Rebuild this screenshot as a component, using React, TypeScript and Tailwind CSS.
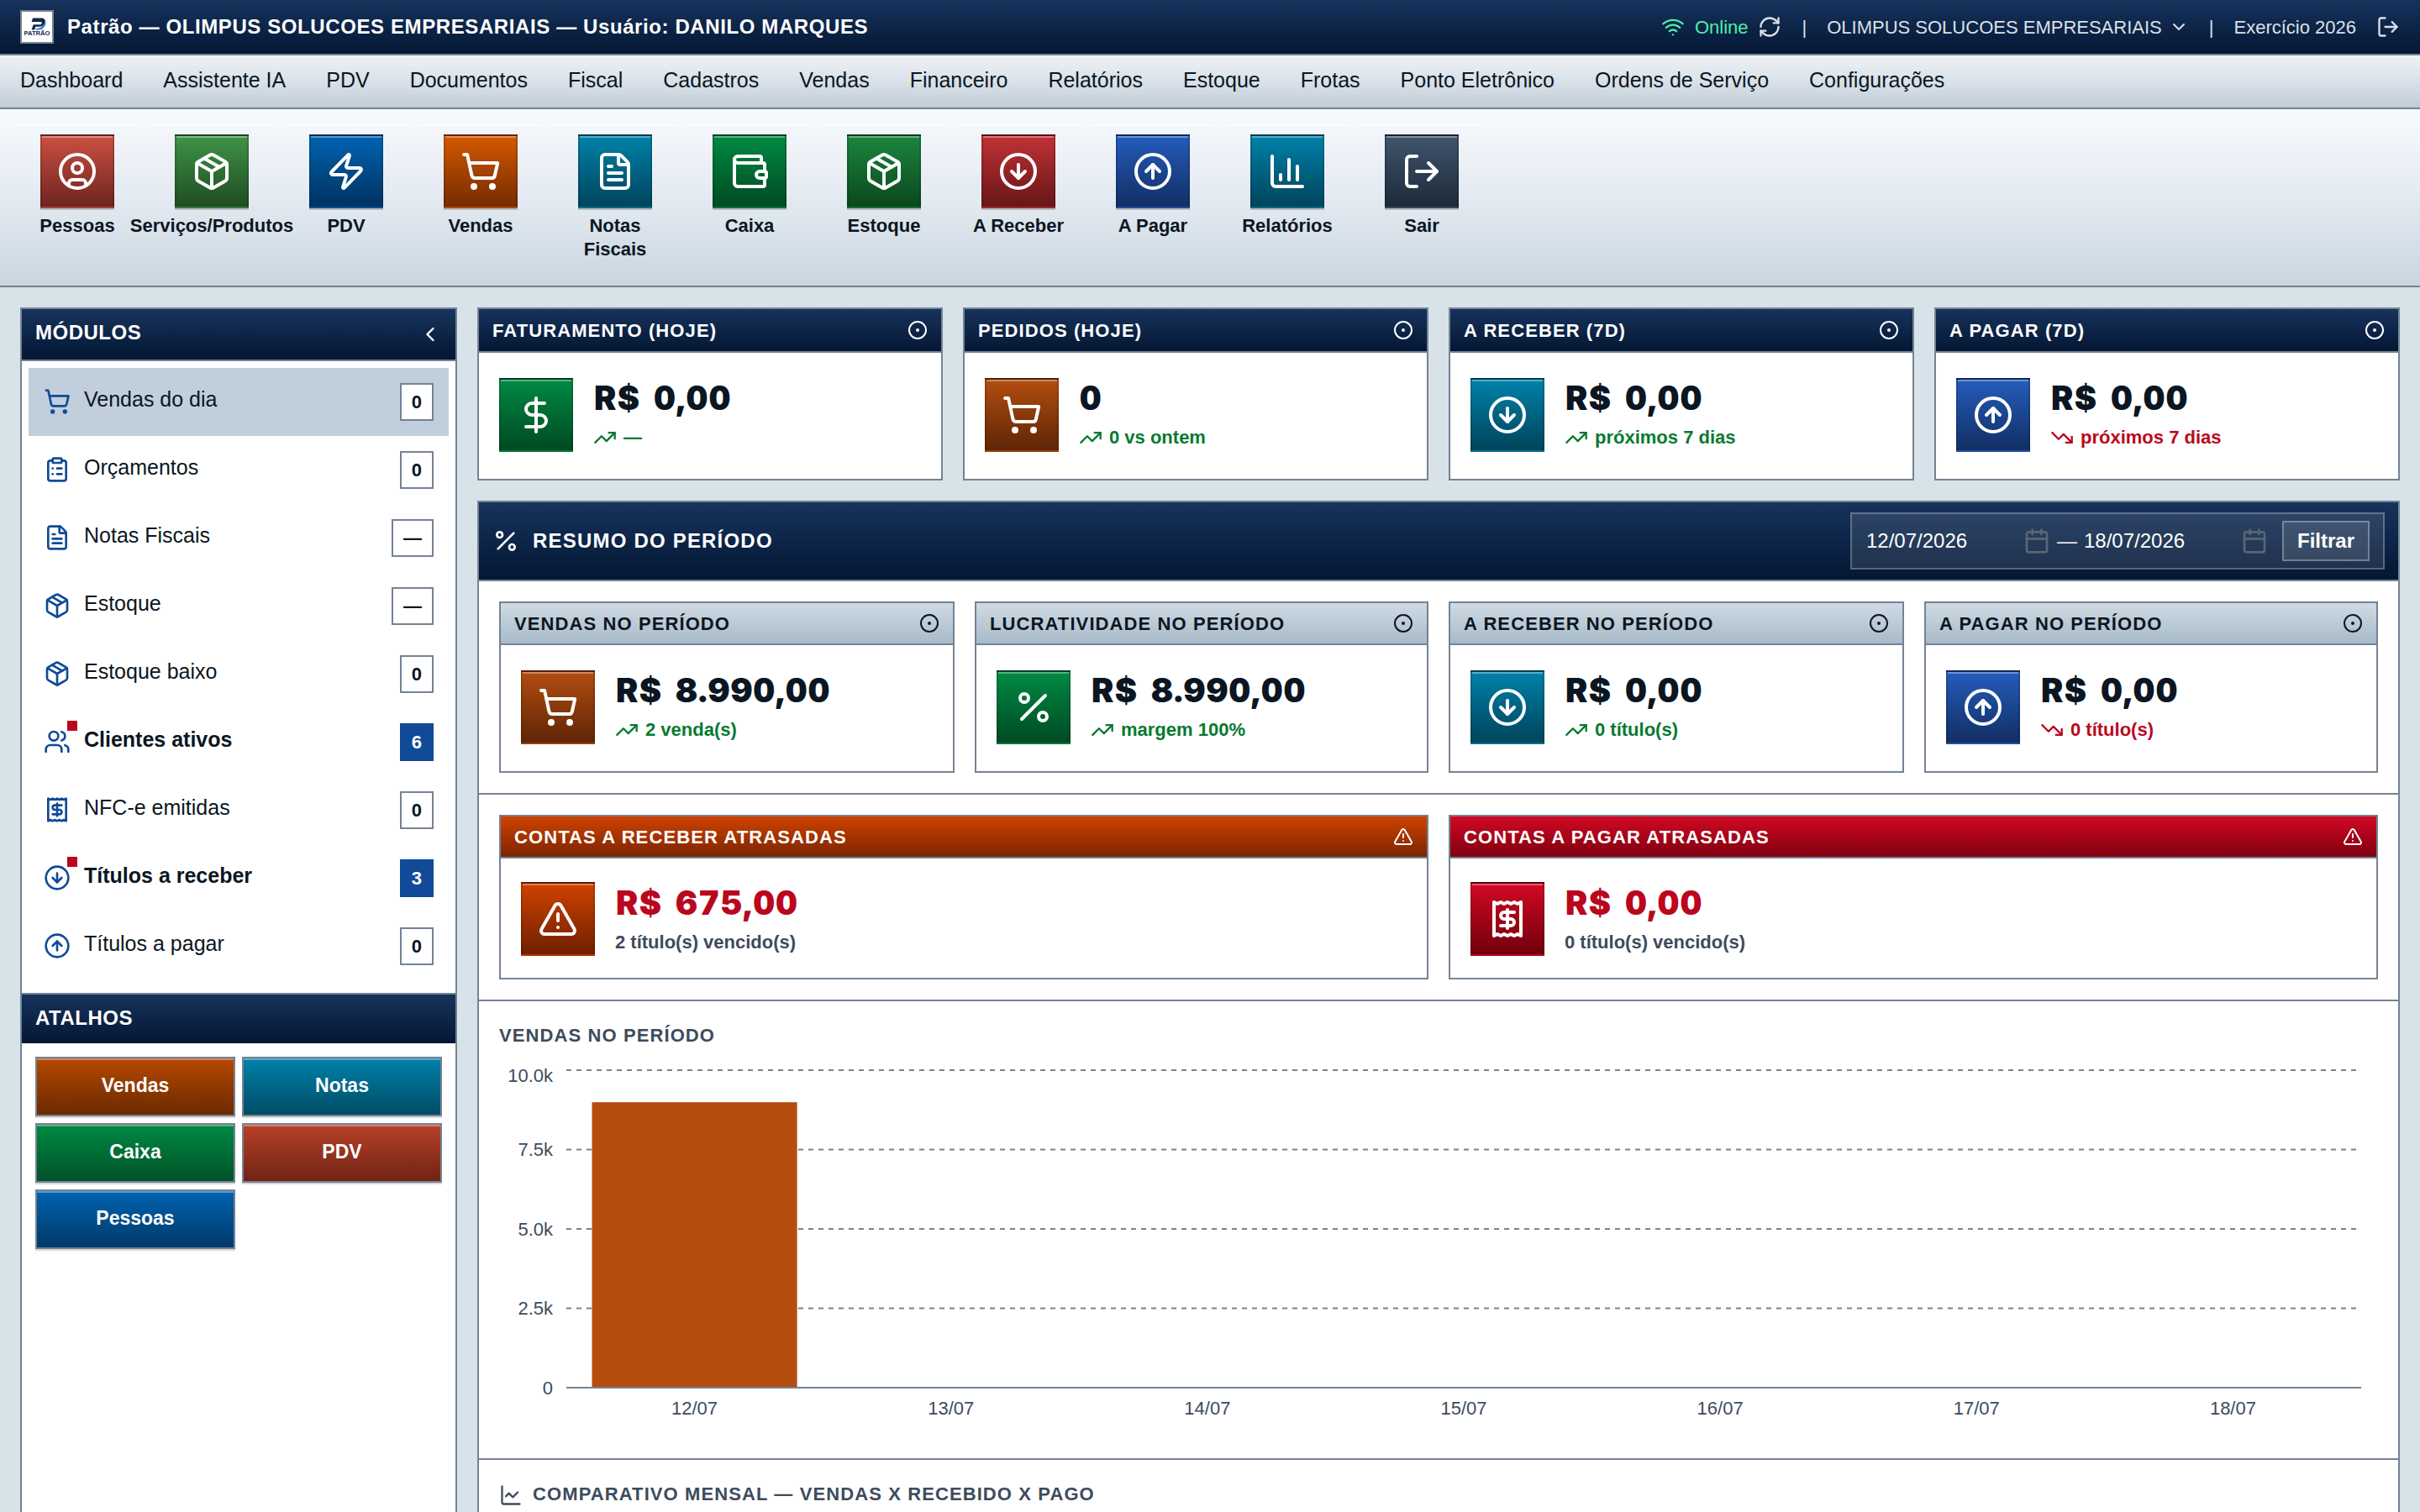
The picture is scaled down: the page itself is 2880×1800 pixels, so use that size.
import type { ReactNode } from 'react';
import {
  Calendar,
  ChartColumn,
  ChartLine,
  ChevronDown,
  ChevronLeft,
  CircleArrowDown,
  CircleArrowUp,
  CircleDot,
  CircleUser,
  ClipboardList,
  DollarSign,
  FileText,
  LogOut,
  Package,
  Percent,
  RefreshCw,
  ShoppingCart,
  TrendingDown,
  TrendingUp,
  TriangleAlert,
  Users,
  Wallet,
  Wifi,
  Zap,
} from 'lucide-react';
import clsx from 'clsx';

type Icon = (props: { size?: number | string; className?: string }) => ReactNode;
type IconType = Icon | typeof Zap;

function Receipt({ size = 24, className }: { size?: number | string; className?: string }) {
  return (
    <svg
      width={size}
      height={size}
      viewBox="0 0 24 24"
      fill="none"
      stroke="currentColor"
      strokeWidth="2"
      strokeLinecap="round"
      strokeLinejoin="round"
      className={className}
    >
      <path d="M4 2v20l2-1 2 1 2-1 2 1 2-1 2 1 2-1 2 1V2l-2 1-2-1-2 1-2-1-2 1-2-1-2 1Z" />
      <path d="M16 8h-6a2 2 0 1 0 0 4h4a2 2 0 1 1 0 4H8" />
      <path d="M12 17.5v-11" />
    </svg>
  );
}

const MENU = [
  'Dashboard',
  'Assistente IA',
  'PDV',
  'Documentos',
  'Fiscal',
  'Cadastros',
  'Vendas',
  'Financeiro',
  'Relatórios',
  'Estoque',
  'Frotas',
  'Ponto Eletrônico',
  'Ordens de Serviço',
  'Configurações',
];

const TONES = {
  coral: 'from-[#cb5041] to-[#6f2520]',
  leaf: 'from-[#3f9446] to-[#1f4d22]',
  blue: 'from-[#0063b1] to-[#003362]',
  orange: 'from-[#d65800] to-[#742d00]',
  teal: 'from-[#0081aa] to-[#00455b]',
  green: 'from-[#008a43] to-[#004a23]',
  forest: 'from-[#1c853f] to-[#0b481e]',
  red: 'from-[#c13236] to-[#681618]',
  royal: 'from-[#245cbc] to-[#122f64]',
  slate: 'from-[#40556d] to-[#1e2a39]',
  rust: 'from-[#b34d10] to-[#5f2606]',
  alert: 'from-[#cf4200] to-[#702000]',
  danger: 'from-[#d20a24] to-[#72000c]',
};

type Tone = keyof typeof TONES;

const TOOLBAR: { label: string; icon: IconType; tone: Tone }[] = [
  { label: 'Pessoas', icon: CircleUser, tone: 'coral' },
  { label: 'Serviços/Produtos', icon: Package, tone: 'leaf' },
  { label: 'PDV', icon: Zap, tone: 'blue' },
  { label: 'Vendas', icon: ShoppingCart, tone: 'orange' },
  { label: 'Notas Fiscais', icon: FileText, tone: 'teal' },
  { label: 'Caixa', icon: Wallet, tone: 'green' },
  { label: 'Estoque', icon: Package, tone: 'forest' },
  { label: 'A Receber', icon: CircleArrowDown, tone: 'red' },
  { label: 'A Pagar', icon: CircleArrowUp, tone: 'royal' },
  { label: 'Relatórios', icon: ChartColumn, tone: 'teal' },
  { label: 'Sair', icon: LogOut, tone: 'slate' },
];

const MODULES: { label: string; icon: IconType; badge: string; active?: boolean; alert?: boolean }[] = [
  { label: 'Vendas do dia', icon: ShoppingCart, badge: '0', active: true },
  { label: 'Orçamentos', icon: ClipboardList, badge: '0' },
  { label: 'Notas Fiscais', icon: FileText, badge: '—' },
  { label: 'Estoque', icon: Package, badge: '—' },
  { label: 'Estoque baixo', icon: Package, badge: '0' },
  { label: 'Clientes ativos', icon: Users, badge: '6', alert: true },
  { label: 'NFC-e emitidas', icon: Receipt, badge: '0' },
  { label: 'Títulos a receber', icon: CircleArrowDown, badge: '3', alert: true },
  { label: 'Títulos a pagar', icon: CircleArrowUp, badge: '0' },
];

const SHORTCUTS = [
  { label: 'Vendas', tone: 'from-[#b64900] to-[#6b2a00]' },
  { label: 'Notas', tone: 'from-[#0081aa] to-[#004d66]' },
  { label: 'Caixa', tone: 'from-[#008a43] to-[#005228]' },
  { label: 'PDV', tone: 'from-[#b94128] to-[#702415]' },
  { label: 'Pessoas', tone: 'from-[#0063b1] to-[#003a69]' },
];

const SALES = [
  { day: '12/07', total: 8990 },
  { day: '13/07', total: 0 },
  { day: '14/07', total: 0 },
  { day: '15/07', total: 0 },
  { day: '16/07', total: 0 },
  { day: '17/07', total: 0 },
  { day: '18/07', total: 0 },
];

function Tile({ icon: Icon, tone, raised }: { icon: IconType; tone: Tone; raised?: boolean }) {
  return (
    <span
      className={clsx(
        'flex size-[88px] shrink-0 items-center justify-center border-2 border-black/15 bg-linear-to-b text-white',
        raised
          ? 'shadow-[inset_0_2px_0_rgba(255,255,255,0.35),0_2px_0_rgba(0,0,0,0.18)]'
          : 'shadow-[inset_0_2px_0_rgba(255,255,255,0.35)]',
        TONES[tone]
      )}
    >
      <Icon size={48} />
    </span>
  );
}

function Logo() {
  return (
    <div className="size-10 shrink-0 border-2 border-[#748394] bg-white">
      <svg viewBox="0 0 36 36" className="block size-full">
        <path
          d="M13 7.500h10c4 0 5.500 2.500 4.600 5.500-1 3.200-3.400 4.800-6.600 4.800h-4.500l-1.300 3.700h-3.700l2.200-6.200h7.600c1.200 0 2-.5 2.300-1.500.4-1.200-.1-1.900-1.500-1.900H11.600z"
          fill="#14284b"
        />
        <path d="M28.300 11c.8 6-3 10.500-9.300 10.500h-2.600l.8-1.600c5.600.2 9.600-3.400 11.100-8.900z" fill="#2f6fd6" />
        <text x="2.500" y="27.800" fontSize="6.500" fontWeight="700" textLength="31" lengthAdjust="spacingAndGlyphs" fill="#14284b">
          PATRÃO
        </text>
      </svg>
    </div>
  );
}

function TitleBar() {
  return (
    <header className="flex h-[66px] items-center border-b-2 border-[#748394] bg-linear-to-b from-[#17335d] to-[#051733] px-6 text-white">
      <Logo />
      <h1 className="ml-4 text-2xl font-bold tracking-[0.6px]">
        Patrão — OLIMPUS SOLUCOES EMPRESARIAIS — Usuário: DANILO MARQUES
      </h1>
      <div className="ml-auto flex items-center text-[22px] text-[#dbe0e8]">
        <span className="flex items-center gap-3 text-[#4deeaa]">
          <Wifi size={28} />
          Online
        </span>
        <RefreshCw size={28} className="ml-3" />
        <span className="mx-6">|</span>
        <span className="flex items-center gap-2">
          OLIMPUS SOLUCOES EMPRESARIAIS
          <ChevronDown size={24} />
        </span>
        <span className="mx-6">|</span>
        <span>Exercício 2026</span>
        <LogOut size={28} className="ml-6" />
      </div>
    </header>
  );
}

function MenuBar() {
  return (
    <nav className="flex h-16 items-center gap-12 border-b-2 border-[#748394] bg-linear-to-b from-[#eef2f5] via-[#d9e1e9] to-[#c1cdd6] px-6 pb-[3px] text-[25px] text-[#0b1622]">
      {MENU.map((item) => (
        <a key={item}>{item}</a>
      ))}
    </nav>
  );
}

function Toolbar() {
  return (
    <div className="flex h-[212px] gap-2 border-b-2 border-[#748394] bg-linear-to-b from-[#f8fafd] via-[#e4eaf2] to-[#cad6df] p-4">
      {TOOLBAR.map(({ label, icon, tone }) => (
        <button
          key={label}
          className="flex w-[152px] flex-col items-center border-2 border-transparent px-2 pt-3 shadow-[inset_0_2px_0_rgba(255,255,255,0.7)]"
        >
          <Tile icon={icon} tone={tone} raised />
          <span className="mt-[7px] flex max-w-[120px] justify-center text-center text-[22px] leading-[28px] font-bold text-[#0b1622]">
            {label}
          </span>
        </button>
      ))}
    </div>
  );
}

function Sidebar() {
  return (
    <aside className="flex w-[520px] shrink-0 flex-col border-2 border-b-0 border-[#748394] bg-white text-[#0b1622]">
      <div className="flex h-[62px] shrink-0 items-center justify-between border-b-2 border-[#748394] bg-linear-to-b from-[#17335d] to-[#051733] px-4 text-white">
        <h2 className="pb-1 text-2xl font-bold tracking-[0.5px]">MÓDULOS</h2>
        <ChevronLeft size={28} />
      </div>
      <ul className="px-2 pt-2 pb-[15px]">
        {MODULES.map(({ label, icon: Icon, badge, active, alert }) => (
          <li
            key={label}
            className={clsx('flex h-[81px] items-center px-[18px]', active && 'bg-[#c1cfdc]', alert && 'font-bold')}
          >
            <span className="relative mb-0.5 text-[#114a98]">
              <Icon size={32} />
              {alert && <span className="absolute -top-[9px] -right-2 size-3 bg-[#bb071d]" />}
            </span>
            <span className="ml-4 pb-[5px] text-[25px]">{label}</span>
            <span
              className={clsx(
                'ml-auto flex h-[45px] min-w-10 items-center justify-center border-2 px-3 text-[22px] font-bold',
                alert ? 'border-[#114a98] bg-[#114a98] text-white' : 'border-[#748394] bg-white'
              )}
            >
              {badge}
            </span>
          </li>
        ))}
      </ul>
      <div className="flex h-[60px] items-center border-t-2 border-[#748394] bg-linear-to-b from-[#17335d] to-[#051733] px-4 text-white">
        <h2 className="pb-0.5 text-2xl font-bold tracking-[0.5px]">ATALHOS</h2>
      </div>
      <div className="grid grid-cols-2 gap-2 p-4">
        {SHORTCUTS.map(({ label, tone }) => (
          <button
            key={label}
            className={clsx(
              'h-[71px] border-2 border-[#748394] bg-linear-to-b pb-0.5 text-[23px] font-bold text-white shadow-[inset_0_2px_0_rgba(255,255,255,0.35),0_2px_0_rgba(0,0,0,0.15)]',
              tone
            )}
          >
            {label}
          </button>
        ))}
      </div>
    </aside>
  );
}

const HEADS = {
  navy: 'h-[52px] from-[#17335d] to-[#051733] text-white',
  light: 'h-[50px] from-[#cfdbe4] to-[#a8bac8] text-[#0b1622]',
  alert: 'h-[50px] from-[#cf4200] to-[#7d2500] text-white',
  danger: 'h-[50px] from-[#d20a24] to-[#80000f] text-white',
};

interface CardProps {
  title: string;
  head: keyof typeof HEADS;
  icon: IconType;
  tone: Tone;
  value: string;
  note: string;
  trend?: 'up' | 'down';
}

function Card({ title, head, icon, tone, value, note, trend }: CardProps) {
  const overdue = head === 'alert' || head === 'danger';
  const HeadIcon = overdue ? TriangleAlert : CircleDot;
  return (
    <div className="border-2 border-[#748394] bg-white">
      <div className={clsx('flex items-center justify-between border-b-2 border-[#748394] bg-linear-to-b px-4', HEADS[head])}>
        <h3 className="text-[22px] font-bold tracking-[0.05em]">{title}</h3>
        <HeadIcon size={24} />
      </div>
      <div className={clsx('flex items-center gap-6 px-6', overdue ? 'h-[142px] pt-0.5' : 'h-[150px] pb-0.5')}>
        <Tile icon={icon} tone={tone} />
        <div className={clsx(!overdue && 'pb-0.5')}>
          <p
            className={clsx(
              "pl-px font-['Arial_Black',Inter,sans-serif] text-[39.5px] leading-[44px] font-black tracking-[1.3px] tabular-nums [word-spacing:4px]",
              overdue ? 'text-[#bb071d]' : 'text-[#0b1622]'
            )}
          >
            {value}
          </p>
          <p
            className={clsx(
              'mt-[11px] flex items-center gap-2 text-[22px] leading-[28px] font-bold',
              !trend && 'text-[#3d4b5d]',
              trend === 'up' && 'text-[#077a30]',
              trend === 'down' && 'text-[#bb071d]'
            )}
          >
            {trend === 'up' && <TrendingUp size={28} />}
            {trend === 'down' && <TrendingDown size={28} />}
            {note}
          </p>
        </div>
      </div>
    </div>
  );
}

function DateField({ value }: { value: string }) {
  return (
    <span className="flex w-[219px] items-center justify-between">
      {value}
      <Calendar size={32} className="text-[#5a6672]" />
    </span>
  );
}

function SalesChart() {
  const left = 80;
  const right = 2216;
  const base = 388;
  const top = 10;
  const max = 10000;
  const band = (right - left) / SALES.length;
  const y = (v: number) => base - (v / max) * (base - top);
  return (
    <svg viewBox="0 0 2236 448" className="mt-[15px] block h-[448px] w-[2236px] text-[22px]" fill="#3d4b5d">
      {[10000, 7500, 5000, 2500].map((v) => (
        <line key={v} x1={left} x2={right - 4} y1={y(v)} y2={y(v)} stroke="#748394" strokeWidth="2" strokeDasharray="6 6" />
      ))}
      {[10000, 7500, 5000, 2500, 0].map((v) => (
        <text key={v} x={left - 16} y={y(v) + (v === max ? 13.5 : 7.8)} textAnchor="end">
          {v ? `${(v / 1000).toFixed(1)}k` : '0'}
        </text>
      ))}
      {SALES.map(({ day, total }, i) => (
        <g key={day}>
          <rect x={left + band * (i + 0.1)} y={y(total)} width={band * 0.8} height={base - y(total)} fill="#b54d0f" />
          <text x={left + band * (i + 0.5)} y={base + 31.8} textAnchor="middle">
            {day}
          </text>
        </g>
      ))}
      <line x1={left} x2={right} y1={base} y2={base} stroke="#748394" strokeWidth="2" />
    </svg>
  );
}

function Section({ className, children }: { className: string; children: ReactNode }) {
  return <section className={clsx('border-b-2 border-[#748394] p-6', className)}>{children}</section>;
}

function PeriodPanel() {
  return (
    <div className="mt-6 flex-1 border-2 border-b-0 border-[#748394] bg-white">
      <div className="flex h-[94px] items-center border-b-2 border-[#748394] bg-linear-to-b from-[#17335d] to-[#051733] px-4 text-white">
        <Percent size={32} />
        <h2 className="ml-4 text-2xl font-bold tracking-[0.05em]">RESUMO DO PERÍODO</h2>
        <div className="ml-auto flex h-[68px] w-[636px] items-center border-2 border-white/25 bg-white/10 pr-4 pl-[17px] text-2xl">
          <DateField value="12/07/2026" />
          <span className="mr-2 ml-2">—</span>
          <DateField value="18/07/2026" />
          <button className="ml-auto h-12 border-2 border-white/30 bg-white/10 px-4 leading-none font-bold">Filtrar</button>
        </div>
      </div>
      <Section className="grid grid-cols-[542px_540px_542px_540px] gap-6">
        <Card head="light" title="VENDAS NO PERÍODO" icon={ShoppingCart} tone="rust" value="R$ 8.990,00" note="2 venda(s)" trend="up" />
        <Card head="light" title="LUCRATIVIDADE NO PERÍODO" icon={Percent} tone="green" value="R$ 8.990,00" note="margem 100%" trend="up" />
        <Card head="light" title="A RECEBER NO PERÍODO" icon={CircleArrowDown} tone="teal" value="R$ 0,00" note="0 título(s)" trend="up" />
        <Card head="light" title="A PAGAR NO PERÍODO" icon={CircleArrowUp} tone="royal" value="R$ 0,00" note="0 título(s)" trend="down" />
      </Section>
      <Section className="grid grid-cols-2 gap-6">
        <Card head="alert" title="CONTAS A RECEBER ATRASADAS" icon={TriangleAlert} tone="alert" value="R$ 675,00" note="2 título(s) vencido(s)" />
        <Card head="danger" title="CONTAS A PAGAR ATRASADAS" icon={Receipt} tone="danger" value="R$ 0,00" note="0 título(s) vencido(s)" />
      </Section>
      <Section className="h-[546px]">
        <h3 className="pt-px text-[22px] leading-[32px] font-bold tracking-[0.05em] text-[#3d4b5d]">VENDAS NO PERÍODO</h3>
        <SalesChart />
      </Section>
      <div className="p-6 text-[#3d4b5d]">
        <h3 className="flex items-center gap-3 text-[22px] leading-[33px] font-bold tracking-[0.05em]">
          <ChartLine size={28} className="mt-[3px]" />
          COMPARATIVO MENSAL — VENDAS X RECEBIDO X PAGO
        </h3>
      </div>
    </div>
  );
}

export default function App() {
  return (
    <div className="flex h-[1800px] w-[2880px] flex-col overflow-hidden bg-[#d8e3e9] font-['Liberation_Sans',Arial,sans-serif]">
      <TitleBar />
      <MenuBar />
      <Toolbar />
      <div className="flex min-h-0 flex-1 gap-6 px-6 pt-6">
        <Sidebar />
        <main className="flex min-w-0 flex-1 flex-col">
          <div className="grid grid-cols-4 gap-6">
            <Card head="navy" title="FATURAMENTO (HOJE)" icon={DollarSign} tone="green" value="R$ 0,00" note="—" trend="up" />
            <Card head="navy" title="PEDIDOS (HOJE)" icon={ShoppingCart} tone="rust" value="0" note="0 vs ontem" trend="up" />
            <Card head="navy" title="A RECEBER (7D)" icon={CircleArrowDown} tone="teal" value="R$ 0,00" note="próximos 7 dias" trend="up" />
            <Card head="navy" title="A PAGAR (7D)" icon={CircleArrowUp} tone="royal" value="R$ 0,00" note="próximos 7 dias" trend="down" />
          </div>
          <PeriodPanel />
        </main>
      </div>
    </div>
  );
}
